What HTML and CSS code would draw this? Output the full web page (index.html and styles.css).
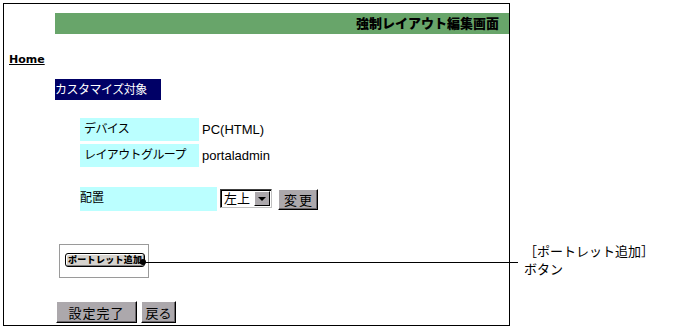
FILE: index.html
```html
<!DOCTYPE html>
<html lang="ja">
<head>
    <meta charset="UTF-8">
    <meta name="viewport" content="width=device-width, initial-scale=1.0">
    <title>強制レイアウト編集画面</title>
    <link rel="stylesheet" href="styles.css">
</head>
<body>
    <div class="page">
        <div class="frame">
            <div class="titlebar">
                <h1 class="title">強制レイアウト編集画面</h1>
            </div>
            <a href="#" class="home">Home</a>
            <div class="target">カスタマイズ対象</div>
            <div class="info">
                <span class="info-label">デバイス</span>
                <span class="info-value">PC(HTML)</span>
                <span class="info-label">レイアウトグループ</span>
                <span class="info-value">portaladmin</span>
            </div>
            <div class="place-row">
                <span class="place-label">配置</span>
                <div class="fake-select">
                    <span class="fake-select-value">左上</span>
                    <span class="fake-select-arrow"></span>
                </div>
                <button class="btn btn-change">変更</button>
            </div>
            <div class="portlet-box">
                <span class="portlet-btn">ポートレット追加</span>
            </div>
            <div class="actions">
                <button class="btn btn-done">設定完了</button>
                <button class="btn btn-back">戻る</button>
            </div>
        </div>

        <!-- callout annotation -->
        <span class="callout-dot"></span>
        <span class="callout-line"></span>
        <div class="callout-text">
            <span>［ポートレット追加］</span>
            <span>ボタン</span>
        </div>
    </div>
</body>
</html>
```

FILE: styles.css
```css
*,
*::after,
*::before {
    box-sizing: border-box;
}
body {
    margin: 0;
    background: #fff;
    font-family: "Noto Sans CJK JP", "Liberation Sans", sans-serif;
    color: #000;
}
.page {
    position: relative;
    width: 678px;
    height: 330px;
}
.frame {
    margin: 3px 0 0 3px;
    width: 507px;
    height: 323px;
    border: 1px solid #000;
    display: flex;
    flex-direction: column;
    align-items: flex-start;
}
.titlebar {
    margin: 9px 0 0 51px;
    width: 454px;
    height: 21px;
    background: #68a56a;
    text-align: right;
    padding-right: 10px;
}
.title {
    margin: 0;
    font-size: 13px;
    font-weight: 900;
    line-height: 20px;
}
.home {
    margin: 19px 0 0 5px;
    font-family: "DejaVu Sans", "Liberation Sans", sans-serif;
    font-size: 11px;
    font-weight: bold;
    line-height: 14px;
    color: #000;
}
.target {
    margin: 12px 0 0 51px;
    width: 106px;
    height: 21px;
    background: #000066;
    color: #fff;
    font-size: 12px;
    line-height: 20px;
    letter-spacing: -0.5px;
}
.info {
    margin: 18px 0 0 76px;
    display: grid;
    grid-template-columns: 119px auto;
    column-gap: 3px;
    row-gap: 2px;
}
.info-label {
    height: 23px;
    background: #bbffff;
    font-size: 12px;
    line-height: 20px;
    padding-left: 4px;
    letter-spacing: -0.6px;
}
.info-value {
    font-family: "Liberation Sans", sans-serif;
    font-size: 13px;
    line-height: 24px;
}
.place-row {
    margin: 19px 0 0 76px;
    display: flex;
    align-items: flex-start;
}
.place-label {
    width: 137px;
    height: 24px;
    background: #bbffff;
    font-size: 12px;
    line-height: 20px;
}
.fake-select {
    margin: 2px 0 0 3px;
    width: 52px;
    height: 19px;
    display: flex;
    background: #fff;
    border-top: 1px solid #404040;
    border-left: 1px solid #404040;
    border-right: 1px solid #c0c0c0;
    border-bottom: 1px solid #c0c0c0;
    box-shadow: inset 1px 1px 0 #000;
}
.fake-select-value {
    flex-grow: 1;
    padding-left: 3px;
    font-size: 13px;
    line-height: 16px;
}
.fake-select-arrow {
    position: relative;
    width: 16px;
    margin: 1px 1px 1px 0;
    background: #aca8ac;
    border-top: 1px solid #fff;
    border-left: 1px solid #fff;
    border-right: 1px solid #000;
    border-bottom: 1px solid #000;
}
.fake-select-arrow::after {
    content: "";
    position: absolute;
    left: 3px;
    top: 5px;
    border-left: 4px solid transparent;
    border-right: 4px solid transparent;
    border-top: 4px solid #000;
}
.btn {
    font-family: "Noto Sans CJK JP", sans-serif;
    font-size: 13px;
    line-height: 17px;
    padding: 0;
    background: #aca8ac;
    color: #000;
    border-top: 1px solid #fff;
    border-left: 1px solid #fff;
    border-right: 1px solid #000;
    border-bottom: 1px solid #000;
    box-shadow: inset -1px -1px 0 #6a666a;
    cursor: pointer;
}
.btn-change {
    margin: 2px 0 0 6px;
    width: 40px;
    height: 21px;
    letter-spacing: 2px;
    padding-left: 2px;
}
.portlet-box {
    margin: 33px 0 0 55px;
    width: 90px;
    height: 34px;
    border: 1px solid #9a9a9a;
    padding: 8px 0 0 5px;
}
.portlet-btn {
    display: block;
    width: 80px;
    height: 14px;
    border: 1px solid #000;
    border-radius: 3px;
    box-shadow: inset 1px 1px 0 #fff, inset -1px -1px 0 #808080;
    background: #d6d3ce;
    font-size: 9px;
    font-weight: 900;
    line-height: 12px;
    padding-left: 2px;
    letter-spacing: 0.3px;
    white-space: nowrap;
    overflow: hidden;
}
.actions {
    margin: 23px 0 0 52px;
    display: flex;
    gap: 4px;
}
.btn-done {
    width: 81px;
    height: 22px;
    letter-spacing: 1px;
}
.btn-back {
    width: 35px;
    height: 22px;
}
.callout-dot {
    position: absolute;
    left: 140px;
    top: 256px;
    width: 6px;
    height: 6px;
    border-radius: 50%;
    background: #000;
}
.callout-line {
    position: absolute;
    left: 145px;
    top: 259px;
    width: 373px;
    height: 1px;
    background: #000;
}
.callout-text {
    position: absolute;
    left: 524px;
    top: 239px;
    display: flex;
    flex-direction: column;
    font-size: 13px;
    line-height: 18px;
}
```
